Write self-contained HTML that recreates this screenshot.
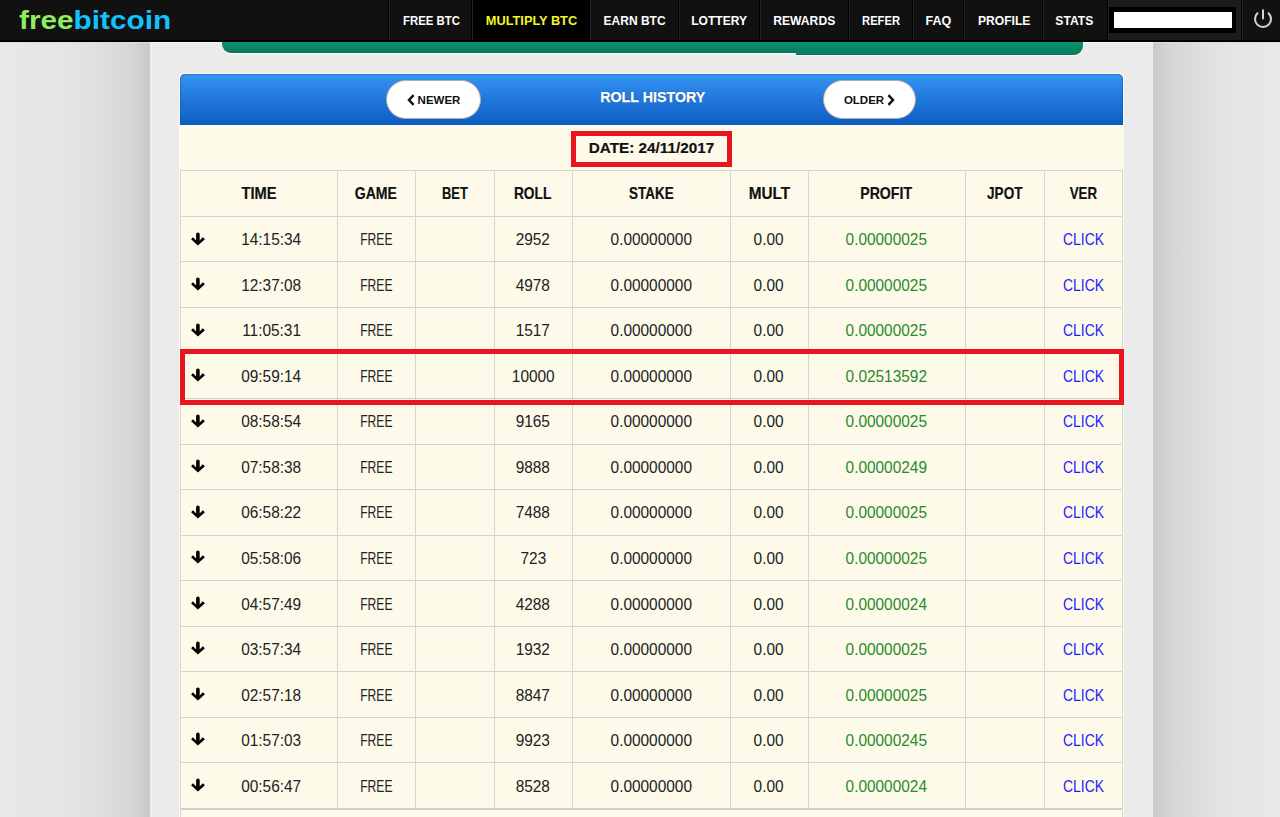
<!DOCTYPE html>
<html><head><meta charset="utf-8">
<style>
*{margin:0;padding:0;box-sizing:border-box}
html,body{width:1280px;height:817px;overflow:hidden}
body{position:relative;font-family:"Liberation Sans",sans-serif;
background:linear-gradient(to right,#e8e8e8 0px,#e5e5e5 60px,#e0e0e0 95px,#d8d8d8 125px,#d0d0d0 140px,#c9c9c9 150px,#c9c9c9 1153px,#d0d0d0 1163px,#d8d8d8 1178px,#e0e0e0 1205px,#e5e5e5 1235px,#e8e8e8 1280px);}
.abs{position:absolute}
.sx{display:inline-block;transform-origin:50% 50%;white-space:nowrap}
#container{position:absolute;left:150px;top:0;width:1003px;height:817px;background:#ebebeb}
#nav{position:absolute;left:0;top:0;width:1280px;height:42px;background:#111;border-bottom:2px solid #000}
.ni{position:absolute;top:0;height:40px}
.sep{position:absolute;top:0;width:2px;height:40px;border-left:1px solid #000;background:#232323}
.nt{position:absolute;top:0;width:200px;color:#fff;font-weight:bold;font-size:13px;line-height:41px;text-align:center}
.act{background:#000}
.act .nt{color:#ffff22}
#logo{position:absolute;left:19px;top:3px;font-size:26px;font-weight:bold;line-height:34px;transform-origin:0 0;transform:scaleX(1.145);white-space:nowrap}
#green{position:absolute;left:222px;top:42px;width:574px;height:11px;background:linear-gradient(to bottom,#0a9470 0px,#088664 5px,#077c5c 10px,#056e50 11px);border-radius:0 0 0 9px;box-shadow:0 1px 0 #fafafa}
#green2{position:absolute;left:796px;top:42px;width:287px;height:13px;background:linear-gradient(to bottom,#0a9470 0px,#088664 6px,#077c5c 12px,#056e50 13px);border-radius:0 0 9px 0;box-shadow:0 1px 0 #fafafa}
#box{position:absolute;left:179px;top:73px;width:945px;height:760px;background:#fdfaea;border:1px solid #fdfaea;border-radius:4px 4px 0 0}
#hdr{position:absolute;left:180px;top:74px;width:943px;height:51px;border-radius:5px 5px 0 0;
background:linear-gradient(to bottom,#1a6cd2 0px,#3592f0 1.5px,#2c86e8 12px,#1f76da 26px,#1669cf 40px,#0a5cc1 51px);box-shadow:inset 1px 0 0 rgba(10,70,170,.45),inset -1px 0 0 rgba(10,70,170,.45)}
.btn{position:absolute;top:80px;height:39px;background:#fff;border:1px solid #b9a99a;border-radius:20px;font-weight:bold;font-size:11.5px;color:#111;line-height:38.5px;text-align:center;white-space:nowrap}
#title{position:absolute;left:560px;top:84px;width:185px;text-align:center;color:#fff;font-weight:bold;font-size:15.4px;line-height:26px;text-shadow:0 0 1px rgba(0,0,40,.6);-webkit-text-stroke:0.25px #fff}
#datebox{position:absolute;left:571px;top:131px;width:161px;height:36px;border:5px solid #e8141e;font-weight:bold;font-size:15.3px;color:#111;-webkit-text-stroke:0.2px #111;text-align:center;line-height:24px;white-space:nowrap}
.vl{position:absolute;width:1px;background:#d5d5d5}
.hl{position:absolute;height:1px;background:#d5d5d5}
.th{position:absolute;font-weight:bold;font-size:15.9px;color:#111;-webkit-text-stroke:0.2px #111;text-align:center;line-height:20px}
.td{position:absolute;font-size:16.0px;color:#222;text-align:center;line-height:20px}
.g{color:#2a8a2a}
.lk{color:#1c1cff}
#redrow{position:absolute;left:180px;top:349px;width:944px;height:56px;border:5px solid #e8141e}
</style></head><body>
<div id="container"></div>

<div id="nav">
<div id="logo"><span style="color:#90ee5e">free</span><span style="color:#12c2fc">bitcoin</span></div>
<div class="nt" style="left:331.0px;"><span class="sx" style="transform:scaleX(0.875)">FREE BTC</span></div>
<div class="ni act" style="left:472px;width:118px"></div>
<div class="nt" style="left:431.5px;color:#f5f523"><span class="sx" style="transform:scaleX(0.983)">MULTIPLY BTC</span></div>
<div class="nt" style="left:534.5px;"><span class="sx" style="transform:scaleX(0.925)">EARN BTC</span></div>
<div class="nt" style="left:619.5px;"><span class="sx" style="transform:scaleX(0.925)">LOTTERY</span></div>
<div class="nt" style="left:704.6px;"><span class="sx" style="transform:scaleX(0.935)">REWARDS</span></div>
<div class="nt" style="left:780.7px;"><span class="sx" style="transform:scaleX(0.862)">REFER</span></div>
<div class="nt" style="left:838.3px;"><span class="sx" style="transform:scaleX(0.962)">FAQ</span></div>
<div class="nt" style="left:903.7px;"><span class="sx" style="transform:scaleX(0.932)">PROFILE</span></div>
<div class="nt" style="left:974.7px;"><span class="sx" style="transform:scaleX(0.934)">STATS</span></div>
<div class="abs" style="left:1108px;top:0;width:133px;height:40px;background:#1c1c1c"></div>
<div class="sep" style="left:388px"></div>
<div class="sep" style="left:471px"></div>
<div class="sep" style="left:589px"></div>
<div class="sep" style="left:678px"></div>
<div class="sep" style="left:759px"></div>
<div class="sep" style="left:848px"></div>
<div class="sep" style="left:912px"></div>
<div class="sep" style="left:963px"></div>
<div class="sep" style="left:1042px"></div>
<div class="sep" style="left:1107px"></div>
<div class="sep" style="left:1241px"></div>
<div class="abs" style="left:1109px;top:7px;width:127px;height:26px;background:#000"></div>
<div class="abs" style="left:1114px;top:12px;width:118px;height:16px;background:#fff"></div>
<svg class="abs" style="left:1251px;top:7px" width="24" height="24" viewBox="0 0 24 24"><path d="M6.4 6.3 A8 8 0 1 0 17.6 6.3" fill="none" stroke="#d4d4d4" stroke-width="2" stroke-linecap="round"/><line x1="12" y1="3.3" x2="12" y2="11.4" stroke="#d4d4d4" stroke-width="2" stroke-linecap="round"/></svg>
</div>
<div class="abs" style="left:0;top:42px;width:1280px;height:1px;background:#dcdcdc"></div>
<div class="abs" style="left:150px;top:42px;width:1003px;height:1px;background:#f8f8f8"></div>
<div class="abs" style="left:151px;top:42px;width:1px;height:775px;background:#f2f2f2"></div>
<div id="green"></div><div id="green2"></div>
<div id="box"></div>
<div id="hdr"></div>
<div class="btn" style="left:386px;width:95px"><svg width="8" height="12" viewBox="0 0 8 12" style="vertical-align:-1.5px;margin-right:3px"><path d="M6.6 1.2 L2 6 L6.6 10.8" fill="none" stroke="#111" stroke-width="2.4"/></svg>NEWER</div>
<div id="title"><span class="sx" style="transform:scaleX(0.927)">ROLL HISTORY</span></div>
<div class="btn" style="left:823px;width:93px">OLDER<svg width="8" height="12" viewBox="0 0 8 12" style="vertical-align:-1.5px;margin-left:3px"><path d="M1.4 1.2 L6 6 L1.4 10.8" fill="none" stroke="#111" stroke-width="2.4"/></svg></div>
<div id="datebox">DATE: 24/11/2017</div>
<div class="hl" style="left:180px;top:170px;width:943px"></div>
<div class="hl" style="left:180px;top:216px;width:943px"></div>
<div class="hl" style="left:180px;top:261px;width:943px"></div>
<div class="hl" style="left:180px;top:307px;width:943px"></div>
<div class="hl" style="left:180px;top:352px;width:943px"></div>
<div class="hl" style="left:180px;top:398px;width:943px"></div>
<div class="hl" style="left:180px;top:444px;width:943px"></div>
<div class="hl" style="left:180px;top:489px;width:943px"></div>
<div class="hl" style="left:180px;top:535px;width:943px"></div>
<div class="hl" style="left:180px;top:580px;width:943px"></div>
<div class="hl" style="left:180px;top:626px;width:943px"></div>
<div class="hl" style="left:180px;top:671px;width:943px"></div>
<div class="hl" style="left:180px;top:717px;width:943px"></div>
<div class="hl" style="left:180px;top:762px;width:943px"></div>
<div class="hl" style="left:180px;top:808px;width:943px"></div>
<div class="abs" style="left:180px;top:808px;width:943px;height:2px;background:#cfcfcf"></div>
<div class="vl" style="left:180px;top:170px;height:647px"></div>
<div class="vl" style="left:1122px;top:170px;height:647px"></div>
<div class="vl" style="left:337px;top:170px;height:638px"></div>
<div class="vl" style="left:415px;top:170px;height:638px"></div>
<div class="vl" style="left:494px;top:170px;height:638px"></div>
<div class="vl" style="left:572px;top:170px;height:638px"></div>
<div class="vl" style="left:730px;top:170px;height:638px"></div>
<div class="vl" style="left:808px;top:170px;height:638px"></div>
<div class="vl" style="left:965px;top:170px;height:638px"></div>
<div class="vl" style="left:1044px;top:170px;height:638px"></div>
<div class="th" style="left:180px;width:157px;top:184px"><span class="sx" style="transform:scaleX(0.924)">TIME</span></div>
<div class="th" style="left:337px;width:78px;top:184px"><span class="sx" style="transform:scaleX(0.885)">GAME</span></div>
<div class="th" style="left:415px;width:79px;top:184px"><span class="sx" style="transform:scaleX(0.811)">BET</span></div>
<div class="th" style="left:494px;width:78px;top:184px"><span class="sx" style="transform:scaleX(0.865)">ROLL</span></div>
<div class="th" style="left:572px;width:158px;top:184px"><span class="sx" style="transform:scaleX(0.846)">STAKE</span></div>
<div class="th" style="left:730px;width:78px;top:184px"><span class="sx" style="transform:scaleX(0.965)">MULT</span></div>
<div class="th" style="left:808px;width:157px;top:184px"><span class="sx" style="transform:scaleX(0.889)">PROFIT</span></div>
<div class="th" style="left:965px;width:79px;top:184px"><span class="sx" style="transform:scaleX(0.853)">JPOT</span></div>
<div class="th" style="left:1044px;width:79px;top:184px"><span class="sx" style="transform:scaleX(0.836)">VER</span></div>
<div class="abs" style="left:190px;top:231px;width:16px;height:16px"><svg width="16" height="16" viewBox="0 0 16 16"><path d="M6.1 3.2 A1.8 1.8 0 0 1 9.7 3.2 V11 H6.1 Z" fill="#000"/><path d="M1.1 8.2 L3.0 6.3 L7.9 11.2 L12.8 6.3 L14.9 8.2 L7.9 14.6 Z" fill="#000"/></svg></div>
<div class="td" style="left:213px;width:117px;top:230.27px"><span class="sx" style="transform:scaleX(0.963)">14:15:34</span></div>
<div class="td" style="left:337px;width:78px;top:230.27px"><span class="sx" style="transform:scaleX(0.758)">FREE</span></div>
<div class="td" style="left:494px;width:78px;top:230.27px"><span class="sx" style="transform:scaleX(0.963)">2952</span></div>
<div class="td" style="left:572px;width:158px;top:230.27px"><span class="sx" style="transform:scaleX(0.963)">0.00000000</span></div>
<div class="td" style="left:730px;width:78px;top:230.27px"><span class="sx" style="transform:scaleX(0.963)">0.00</span></div>
<div class="td g" style="left:808px;width:157px;top:230.27px"><span class="sx" style="transform:scaleX(0.963)">0.00000025</span></div>
<div class="td lk" style="left:1044px;width:79px;top:230.27px"><span class="sx" style="transform:scaleX(0.870)">CLICK</span></div>
<div class="abs" style="left:190px;top:276px;width:16px;height:16px"><svg width="16" height="16" viewBox="0 0 16 16"><path d="M6.1 3.2 A1.8 1.8 0 0 1 9.7 3.2 V11 H6.1 Z" fill="#000"/><path d="M1.1 8.2 L3.0 6.3 L7.9 11.2 L12.8 6.3 L14.9 8.2 L7.9 14.6 Z" fill="#000"/></svg></div>
<div class="td" style="left:213px;width:117px;top:275.80px"><span class="sx" style="transform:scaleX(0.963)">12:37:08</span></div>
<div class="td" style="left:337px;width:78px;top:275.80px"><span class="sx" style="transform:scaleX(0.758)">FREE</span></div>
<div class="td" style="left:494px;width:78px;top:275.80px"><span class="sx" style="transform:scaleX(0.963)">4978</span></div>
<div class="td" style="left:572px;width:158px;top:275.80px"><span class="sx" style="transform:scaleX(0.963)">0.00000000</span></div>
<div class="td" style="left:730px;width:78px;top:275.80px"><span class="sx" style="transform:scaleX(0.963)">0.00</span></div>
<div class="td g" style="left:808px;width:157px;top:275.80px"><span class="sx" style="transform:scaleX(0.963)">0.00000025</span></div>
<div class="td lk" style="left:1044px;width:79px;top:275.80px"><span class="sx" style="transform:scaleX(0.870)">CLICK</span></div>
<div class="abs" style="left:190px;top:322px;width:16px;height:16px"><svg width="16" height="16" viewBox="0 0 16 16"><path d="M6.1 3.2 A1.8 1.8 0 0 1 9.7 3.2 V11 H6.1 Z" fill="#000"/><path d="M1.1 8.2 L3.0 6.3 L7.9 11.2 L12.8 6.3 L14.9 8.2 L7.9 14.6 Z" fill="#000"/></svg></div>
<div class="td" style="left:213px;width:117px;top:321.33px"><span class="sx" style="transform:scaleX(0.963)">11:05:31</span></div>
<div class="td" style="left:337px;width:78px;top:321.33px"><span class="sx" style="transform:scaleX(0.758)">FREE</span></div>
<div class="td" style="left:494px;width:78px;top:321.33px"><span class="sx" style="transform:scaleX(0.963)">1517</span></div>
<div class="td" style="left:572px;width:158px;top:321.33px"><span class="sx" style="transform:scaleX(0.963)">0.00000000</span></div>
<div class="td" style="left:730px;width:78px;top:321.33px"><span class="sx" style="transform:scaleX(0.963)">0.00</span></div>
<div class="td g" style="left:808px;width:157px;top:321.33px"><span class="sx" style="transform:scaleX(0.963)">0.00000025</span></div>
<div class="td lk" style="left:1044px;width:79px;top:321.33px"><span class="sx" style="transform:scaleX(0.870)">CLICK</span></div>
<div class="abs" style="left:190px;top:367px;width:16px;height:16px"><svg width="16" height="16" viewBox="0 0 16 16"><path d="M6.1 3.2 A1.8 1.8 0 0 1 9.7 3.2 V11 H6.1 Z" fill="#000"/><path d="M1.1 8.2 L3.0 6.3 L7.9 11.2 L12.8 6.3 L14.9 8.2 L7.9 14.6 Z" fill="#000"/></svg></div>
<div class="td" style="left:213px;width:117px;top:366.86px"><span class="sx" style="transform:scaleX(0.963)">09:59:14</span></div>
<div class="td" style="left:337px;width:78px;top:366.86px"><span class="sx" style="transform:scaleX(0.758)">FREE</span></div>
<div class="td" style="left:494px;width:78px;top:366.86px"><span class="sx" style="transform:scaleX(0.963)">10000</span></div>
<div class="td" style="left:572px;width:158px;top:366.86px"><span class="sx" style="transform:scaleX(0.963)">0.00000000</span></div>
<div class="td" style="left:730px;width:78px;top:366.86px"><span class="sx" style="transform:scaleX(0.963)">0.00</span></div>
<div class="td g" style="left:808px;width:157px;top:366.86px"><span class="sx" style="transform:scaleX(0.963)">0.02513592</span></div>
<div class="td lk" style="left:1044px;width:79px;top:366.86px"><span class="sx" style="transform:scaleX(0.870)">CLICK</span></div>
<div class="abs" style="left:190px;top:413px;width:16px;height:16px"><svg width="16" height="16" viewBox="0 0 16 16"><path d="M6.1 3.2 A1.8 1.8 0 0 1 9.7 3.2 V11 H6.1 Z" fill="#000"/><path d="M1.1 8.2 L3.0 6.3 L7.9 11.2 L12.8 6.3 L14.9 8.2 L7.9 14.6 Z" fill="#000"/></svg></div>
<div class="td" style="left:213px;width:117px;top:412.38px"><span class="sx" style="transform:scaleX(0.963)">08:58:54</span></div>
<div class="td" style="left:337px;width:78px;top:412.38px"><span class="sx" style="transform:scaleX(0.758)">FREE</span></div>
<div class="td" style="left:494px;width:78px;top:412.38px"><span class="sx" style="transform:scaleX(0.963)">9165</span></div>
<div class="td" style="left:572px;width:158px;top:412.38px"><span class="sx" style="transform:scaleX(0.963)">0.00000000</span></div>
<div class="td" style="left:730px;width:78px;top:412.38px"><span class="sx" style="transform:scaleX(0.963)">0.00</span></div>
<div class="td g" style="left:808px;width:157px;top:412.38px"><span class="sx" style="transform:scaleX(0.963)">0.00000025</span></div>
<div class="td lk" style="left:1044px;width:79px;top:412.38px"><span class="sx" style="transform:scaleX(0.870)">CLICK</span></div>
<div class="abs" style="left:190px;top:458px;width:16px;height:16px"><svg width="16" height="16" viewBox="0 0 16 16"><path d="M6.1 3.2 A1.8 1.8 0 0 1 9.7 3.2 V11 H6.1 Z" fill="#000"/><path d="M1.1 8.2 L3.0 6.3 L7.9 11.2 L12.8 6.3 L14.9 8.2 L7.9 14.6 Z" fill="#000"/></svg></div>
<div class="td" style="left:213px;width:117px;top:457.92px"><span class="sx" style="transform:scaleX(0.963)">07:58:38</span></div>
<div class="td" style="left:337px;width:78px;top:457.92px"><span class="sx" style="transform:scaleX(0.758)">FREE</span></div>
<div class="td" style="left:494px;width:78px;top:457.92px"><span class="sx" style="transform:scaleX(0.963)">9888</span></div>
<div class="td" style="left:572px;width:158px;top:457.92px"><span class="sx" style="transform:scaleX(0.963)">0.00000000</span></div>
<div class="td" style="left:730px;width:78px;top:457.92px"><span class="sx" style="transform:scaleX(0.963)">0.00</span></div>
<div class="td g" style="left:808px;width:157px;top:457.92px"><span class="sx" style="transform:scaleX(0.963)">0.00000249</span></div>
<div class="td lk" style="left:1044px;width:79px;top:457.92px"><span class="sx" style="transform:scaleX(0.870)">CLICK</span></div>
<div class="abs" style="left:190px;top:504px;width:16px;height:16px"><svg width="16" height="16" viewBox="0 0 16 16"><path d="M6.1 3.2 A1.8 1.8 0 0 1 9.7 3.2 V11 H6.1 Z" fill="#000"/><path d="M1.1 8.2 L3.0 6.3 L7.9 11.2 L12.8 6.3 L14.9 8.2 L7.9 14.6 Z" fill="#000"/></svg></div>
<div class="td" style="left:213px;width:117px;top:503.45px"><span class="sx" style="transform:scaleX(0.963)">06:58:22</span></div>
<div class="td" style="left:337px;width:78px;top:503.45px"><span class="sx" style="transform:scaleX(0.758)">FREE</span></div>
<div class="td" style="left:494px;width:78px;top:503.45px"><span class="sx" style="transform:scaleX(0.963)">7488</span></div>
<div class="td" style="left:572px;width:158px;top:503.45px"><span class="sx" style="transform:scaleX(0.963)">0.00000000</span></div>
<div class="td" style="left:730px;width:78px;top:503.45px"><span class="sx" style="transform:scaleX(0.963)">0.00</span></div>
<div class="td g" style="left:808px;width:157px;top:503.45px"><span class="sx" style="transform:scaleX(0.963)">0.00000025</span></div>
<div class="td lk" style="left:1044px;width:79px;top:503.45px"><span class="sx" style="transform:scaleX(0.870)">CLICK</span></div>
<div class="abs" style="left:190px;top:549px;width:16px;height:16px"><svg width="16" height="16" viewBox="0 0 16 16"><path d="M6.1 3.2 A1.8 1.8 0 0 1 9.7 3.2 V11 H6.1 Z" fill="#000"/><path d="M1.1 8.2 L3.0 6.3 L7.9 11.2 L12.8 6.3 L14.9 8.2 L7.9 14.6 Z" fill="#000"/></svg></div>
<div class="td" style="left:213px;width:117px;top:548.98px"><span class="sx" style="transform:scaleX(0.963)">05:58:06</span></div>
<div class="td" style="left:337px;width:78px;top:548.98px"><span class="sx" style="transform:scaleX(0.758)">FREE</span></div>
<div class="td" style="left:494px;width:78px;top:548.98px"><span class="sx" style="transform:scaleX(0.963)">723</span></div>
<div class="td" style="left:572px;width:158px;top:548.98px"><span class="sx" style="transform:scaleX(0.963)">0.00000000</span></div>
<div class="td" style="left:730px;width:78px;top:548.98px"><span class="sx" style="transform:scaleX(0.963)">0.00</span></div>
<div class="td g" style="left:808px;width:157px;top:548.98px"><span class="sx" style="transform:scaleX(0.963)">0.00000025</span></div>
<div class="td lk" style="left:1044px;width:79px;top:548.98px"><span class="sx" style="transform:scaleX(0.870)">CLICK</span></div>
<div class="abs" style="left:190px;top:595px;width:16px;height:16px"><svg width="16" height="16" viewBox="0 0 16 16"><path d="M6.1 3.2 A1.8 1.8 0 0 1 9.7 3.2 V11 H6.1 Z" fill="#000"/><path d="M1.1 8.2 L3.0 6.3 L7.9 11.2 L12.8 6.3 L14.9 8.2 L7.9 14.6 Z" fill="#000"/></svg></div>
<div class="td" style="left:213px;width:117px;top:594.50px"><span class="sx" style="transform:scaleX(0.963)">04:57:49</span></div>
<div class="td" style="left:337px;width:78px;top:594.50px"><span class="sx" style="transform:scaleX(0.758)">FREE</span></div>
<div class="td" style="left:494px;width:78px;top:594.50px"><span class="sx" style="transform:scaleX(0.963)">4288</span></div>
<div class="td" style="left:572px;width:158px;top:594.50px"><span class="sx" style="transform:scaleX(0.963)">0.00000000</span></div>
<div class="td" style="left:730px;width:78px;top:594.50px"><span class="sx" style="transform:scaleX(0.963)">0.00</span></div>
<div class="td g" style="left:808px;width:157px;top:594.50px"><span class="sx" style="transform:scaleX(0.963)">0.00000024</span></div>
<div class="td lk" style="left:1044px;width:79px;top:594.50px"><span class="sx" style="transform:scaleX(0.870)">CLICK</span></div>
<div class="abs" style="left:190px;top:640px;width:16px;height:16px"><svg width="16" height="16" viewBox="0 0 16 16"><path d="M6.1 3.2 A1.8 1.8 0 0 1 9.7 3.2 V11 H6.1 Z" fill="#000"/><path d="M1.1 8.2 L3.0 6.3 L7.9 11.2 L12.8 6.3 L14.9 8.2 L7.9 14.6 Z" fill="#000"/></svg></div>
<div class="td" style="left:213px;width:117px;top:640.04px"><span class="sx" style="transform:scaleX(0.963)">03:57:34</span></div>
<div class="td" style="left:337px;width:78px;top:640.04px"><span class="sx" style="transform:scaleX(0.758)">FREE</span></div>
<div class="td" style="left:494px;width:78px;top:640.04px"><span class="sx" style="transform:scaleX(0.963)">1932</span></div>
<div class="td" style="left:572px;width:158px;top:640.04px"><span class="sx" style="transform:scaleX(0.963)">0.00000000</span></div>
<div class="td" style="left:730px;width:78px;top:640.04px"><span class="sx" style="transform:scaleX(0.963)">0.00</span></div>
<div class="td g" style="left:808px;width:157px;top:640.04px"><span class="sx" style="transform:scaleX(0.963)">0.00000025</span></div>
<div class="td lk" style="left:1044px;width:79px;top:640.04px"><span class="sx" style="transform:scaleX(0.870)">CLICK</span></div>
<div class="abs" style="left:190px;top:686px;width:16px;height:16px"><svg width="16" height="16" viewBox="0 0 16 16"><path d="M6.1 3.2 A1.8 1.8 0 0 1 9.7 3.2 V11 H6.1 Z" fill="#000"/><path d="M1.1 8.2 L3.0 6.3 L7.9 11.2 L12.8 6.3 L14.9 8.2 L7.9 14.6 Z" fill="#000"/></svg></div>
<div class="td" style="left:213px;width:117px;top:685.57px"><span class="sx" style="transform:scaleX(0.963)">02:57:18</span></div>
<div class="td" style="left:337px;width:78px;top:685.57px"><span class="sx" style="transform:scaleX(0.758)">FREE</span></div>
<div class="td" style="left:494px;width:78px;top:685.57px"><span class="sx" style="transform:scaleX(0.963)">8847</span></div>
<div class="td" style="left:572px;width:158px;top:685.57px"><span class="sx" style="transform:scaleX(0.963)">0.00000000</span></div>
<div class="td" style="left:730px;width:78px;top:685.57px"><span class="sx" style="transform:scaleX(0.963)">0.00</span></div>
<div class="td g" style="left:808px;width:157px;top:685.57px"><span class="sx" style="transform:scaleX(0.963)">0.00000025</span></div>
<div class="td lk" style="left:1044px;width:79px;top:685.57px"><span class="sx" style="transform:scaleX(0.870)">CLICK</span></div>
<div class="abs" style="left:190px;top:731px;width:16px;height:16px"><svg width="16" height="16" viewBox="0 0 16 16"><path d="M6.1 3.2 A1.8 1.8 0 0 1 9.7 3.2 V11 H6.1 Z" fill="#000"/><path d="M1.1 8.2 L3.0 6.3 L7.9 11.2 L12.8 6.3 L14.9 8.2 L7.9 14.6 Z" fill="#000"/></svg></div>
<div class="td" style="left:213px;width:117px;top:731.10px"><span class="sx" style="transform:scaleX(0.963)">01:57:03</span></div>
<div class="td" style="left:337px;width:78px;top:731.10px"><span class="sx" style="transform:scaleX(0.758)">FREE</span></div>
<div class="td" style="left:494px;width:78px;top:731.10px"><span class="sx" style="transform:scaleX(0.963)">9923</span></div>
<div class="td" style="left:572px;width:158px;top:731.10px"><span class="sx" style="transform:scaleX(0.963)">0.00000000</span></div>
<div class="td" style="left:730px;width:78px;top:731.10px"><span class="sx" style="transform:scaleX(0.963)">0.00</span></div>
<div class="td g" style="left:808px;width:157px;top:731.10px"><span class="sx" style="transform:scaleX(0.963)">0.00000245</span></div>
<div class="td lk" style="left:1044px;width:79px;top:731.10px"><span class="sx" style="transform:scaleX(0.870)">CLICK</span></div>
<div class="abs" style="left:190px;top:777px;width:16px;height:16px"><svg width="16" height="16" viewBox="0 0 16 16"><path d="M6.1 3.2 A1.8 1.8 0 0 1 9.7 3.2 V11 H6.1 Z" fill="#000"/><path d="M1.1 8.2 L3.0 6.3 L7.9 11.2 L12.8 6.3 L14.9 8.2 L7.9 14.6 Z" fill="#000"/></svg></div>
<div class="td" style="left:213px;width:117px;top:776.62px"><span class="sx" style="transform:scaleX(0.963)">00:56:47</span></div>
<div class="td" style="left:337px;width:78px;top:776.62px"><span class="sx" style="transform:scaleX(0.758)">FREE</span></div>
<div class="td" style="left:494px;width:78px;top:776.62px"><span class="sx" style="transform:scaleX(0.963)">8528</span></div>
<div class="td" style="left:572px;width:158px;top:776.62px"><span class="sx" style="transform:scaleX(0.963)">0.00000000</span></div>
<div class="td" style="left:730px;width:78px;top:776.62px"><span class="sx" style="transform:scaleX(0.963)">0.00</span></div>
<div class="td g" style="left:808px;width:157px;top:776.62px"><span class="sx" style="transform:scaleX(0.963)">0.00000024</span></div>
<div class="td lk" style="left:1044px;width:79px;top:776.62px"><span class="sx" style="transform:scaleX(0.870)">CLICK</span></div>
<div id="redrow"></div>
</body></html>
